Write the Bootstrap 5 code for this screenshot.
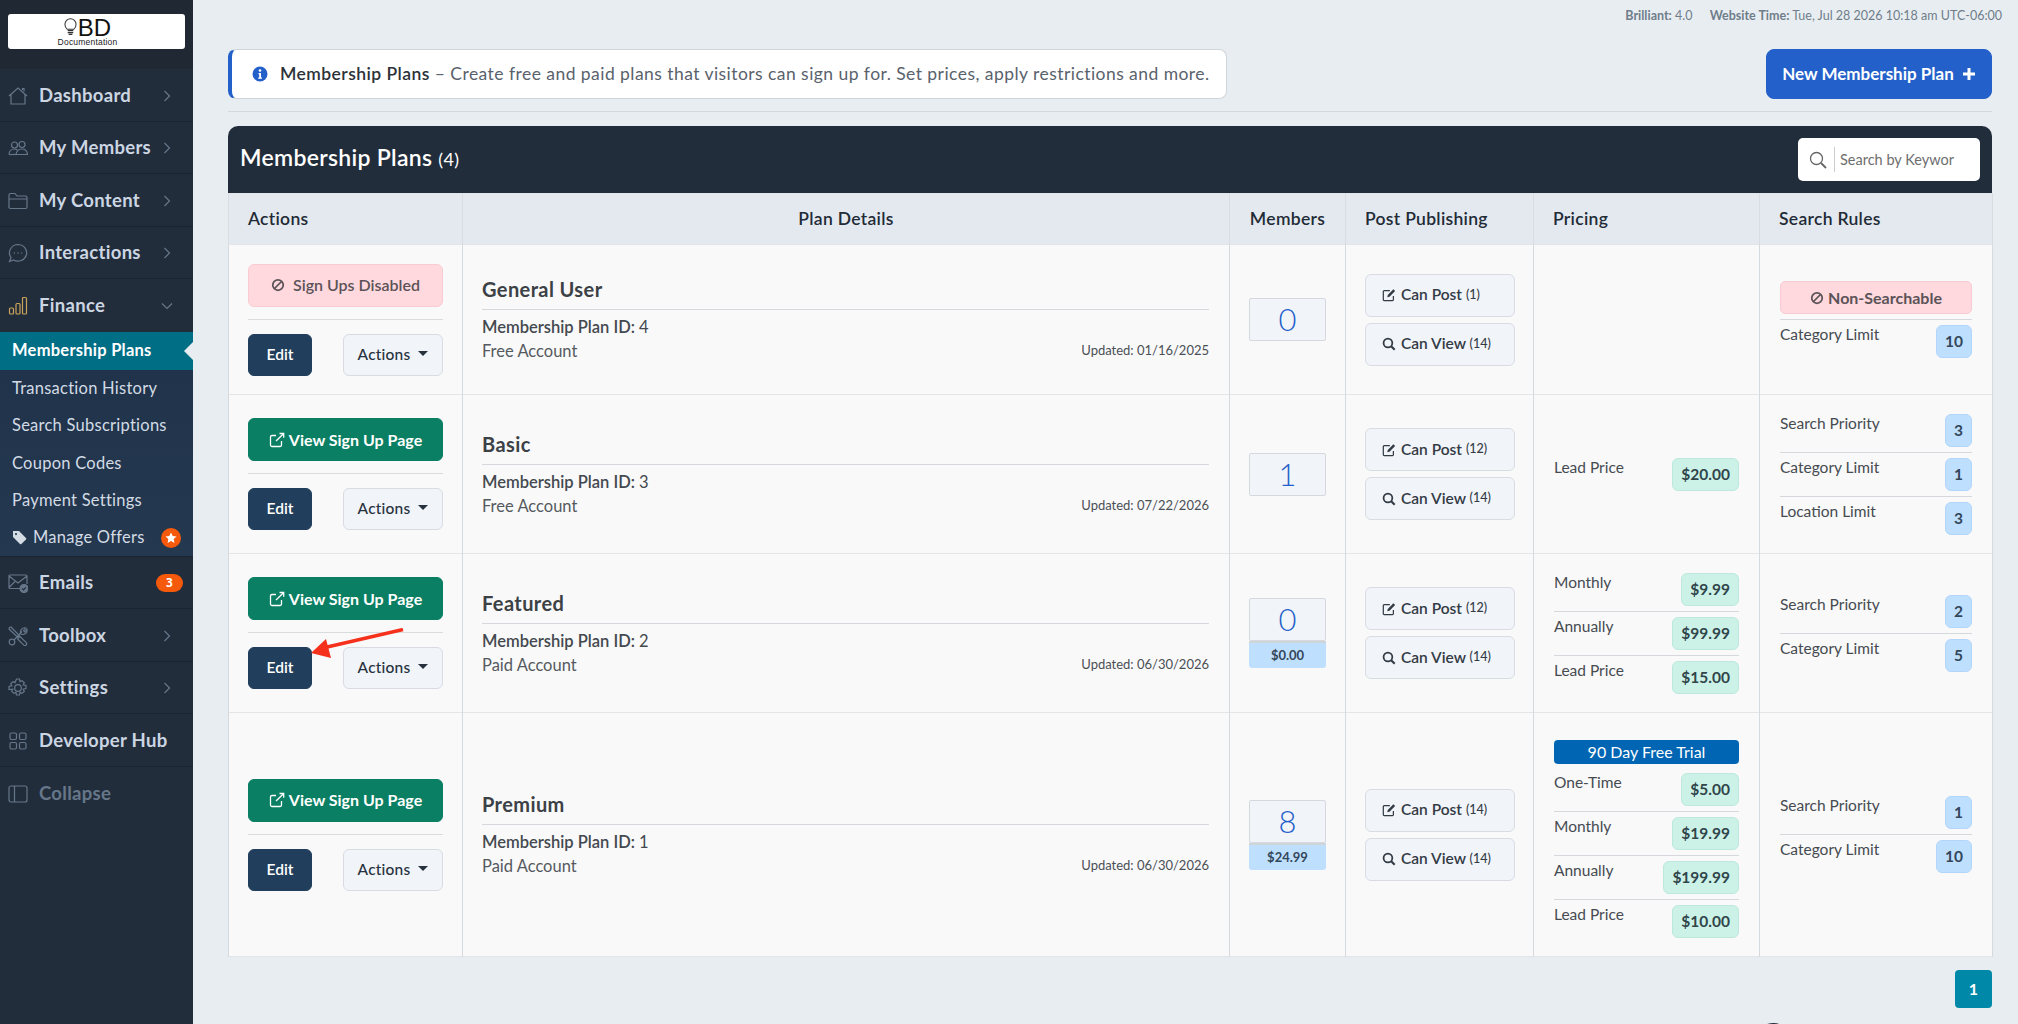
<!DOCTYPE html>
<html>
<head>
<meta charset="utf-8">
<title>Membership Plans</title>
<link href="https://cdn.jsdelivr.net/npm/bootstrap@5.3.0/dist/css/bootstrap.min.css" rel="stylesheet">
<style>
body { background: #e8edf1; font-family: Lato, "Noto Sans", sans-serif; color: #3a4046; height: 1024px; overflow: hidden; }
.side-bar { width: 193px; height: 1024px; background: #222d3b; flex-shrink: 0; }
.logo-wrap { height: 69px; background: #1f2833; padding: 14px 8px 0; }
.logo-box { height: 35px; background: #fff; border-radius: 3px; padding-right: 18px; }
.logo-bd { font: 400 24px/21px "Liberation Sans", sans-serif; color: #111; margin-left: 1px; }
.logo-doc { font: 400 8.5px/9px "Liberation Sans", sans-serif; color: #222; letter-spacing: .2px; }
.side-item { height: 52.5px; padding: 2px 8px 0; border-bottom: 1px solid #1b2430; color: #ccd6e3; font-size: 18.5px; font-weight: 700; text-decoration: none; letter-spacing: .3px; }
.side-item svg.nav-ico { width: 20px; height: 20px; margin-right: 11px; stroke: #66778a; fill: none; stroke-width: 1.2; flex-shrink: 0; }
.side-item .chev { width: 8px; height: 12px; margin-left: auto; margin-right: 14px; stroke: #66778a; fill: none; stroke-width: 1.2; }
.side-item.no-line { border-bottom: 0; }
.side-dim { color: #66778a; }
.sub-menu { background: linear-gradient(#1f3249, #24384f); border-bottom: 1px solid #1b2430; height: 225px; }
.sub-link { height: 37.4px; padding-left: 12px; color: #d3dbe5; font-size: 16.5px; text-decoration: none; letter-spacing: .25px; }
.sub-on { height: 38px; background: #006e85; color: #fff; font-weight: 700; position: relative; }
.sub-on::after { content: ""; position: absolute; right: 0; top: 10px; border: 9px solid transparent; border-right-color: #e8edf1; border-left-width: 0; }
.tag-ico { margin-right: 6px; }
.star-dot { width: 20px; height: 20px; background: #f4590c; border-radius: 50%; margin-left: auto; margin-right: 12px; }
.mail-pill { width: 27px; height: 18px; background: #f4590c; color: #fff; border-radius: 9px; font: 700 12px/18px "DejaVu Sans Mono", monospace; text-align: center; margin-left: auto; margin-right: 2px; }
.main-pane { flex: 1; padding: 0 26px 0 35px; min-width: 0; }
.top-info { height: 49px; padding-top: 7px; margin-right: -10px; font-size: 12.5px; color: #6f7d8b; line-height: 18px; }
.top-info b { font-weight: 700; margin-left: 14px; }
.intro-box { width: 999px; height: 50px; background: #fff; border: 1px solid #d0d5da; border-left: 4px solid #2460c9; border-radius: 8px; font-size: 17.5px; letter-spacing: .45px; color: #59626c; padding-left: 20px; }
.intro-box svg { margin-right: 12px; }
.intro-box b { font-weight: 600; color: #2c3238; }
.new-btn { width: 226px; height: 50px; background: #2460c9; border-color: #2460c9; border-radius: 8px; font-size: 17px; font-weight: 700; color: #fff; }
.head-rule { border-top: 1px solid #d3d8dc; margin: 12px 0 14px; opacity: 1; }
.plans-wrap { width: 1764px; position: relative; }
.plans-head { height: 67px; background: #222d3b; border-radius: 10px 10px 0 0; padding: 0 12px; color: #fff; font-size: 23px; font-weight: 600; letter-spacing: .3px; }
.plans-title { padding-bottom: 4px; }
.plans-head small { font-size: 18px; font-weight: 400; }
.find-box { width: 182px; height: 43px; background: #fff; border-radius: 5px; padding-left: 11px; }
.find-box svg { width: 18px; height: 18px; margin-right: 7px; }
.find-box input { border: 0; border-left: 1px solid #ccc; height: 25px; width: 140px; padding: 0 0 0 5px; font-size: 14.5px; outline: 0; color: #666; }
.find-box input::placeholder { color: #6e6e6e; opacity: 1; }
.plans-table { table-layout: fixed; width: 1764px; --bs-table-bg: #f9f9f9; --bs-table-border-color: #e3e5e8; border-color: #e3e5e8; border-left: 1px solid #d5dadf; border-right: 1px solid #d5dadf; }
.plans-table thead th { height: 51px; background: #e4e9f0; font-size: 17.5px; font-weight: 600; letter-spacing: .3px; color: #222b36; padding: 0 19px; vertical-align: middle; border-color: #d9dde2; }
.plans-table td { padding: 18.5px 20px; vertical-align: middle; }
.plans-table td:nth-child(2), .plans-table td:nth-child(4) { padding-left: 19px; }
.c-act { width: 234px; } .c-plan { width: 767px; } .c-mem { width: 116px; } .c-post { width: 188px; } .c-price { width: 226px; } .c-rule { width: 233px; }
.act-block { position: relative; width: 195px; margin: 0 auto 0 -1px; }
.act-top { height: 43px; border-radius: 6px; font-size: 16px; font-weight: 700; width: 100%; padding: 0; }
.act-green { background: #0a7f63; border-color: #0a7f63; color: #fff; }
.act-off { background: #ffd9de; border: 1px solid #f9ccd3; color: #5b5358; font-weight: 600; }
.act-line { border-top: 1px solid #d9dcdf; margin: 12px 0 14px; opacity: 1; }
.edit-btn { width: 64px; height: 42px; background: #213f5c; border-color: #213f5c; color: #fff; font-size: 15.5px; font-weight: 600; border-radius: 6px; padding: 0; }
.more-btn { width: 100px; height: 42px; background: #f1f4f9; border: 1px solid #d8dce2; color: #27323e; font-size: 15.5px; font-weight: 500; letter-spacing: .2px; border-radius: 6px; padding: 0; }
.more-btn::after { margin-left: 8px; border-top-width: .36em; border-left-width: .36em; border-right-width: .36em; }
.red-arrow { position: absolute; left: 63px; top: 51px; width: 94px; height: 32px; }
.plan-name { font-size: 20px; font-weight: 700; letter-spacing: .4px; color: #3c4146; border-bottom: 1px solid #d5d8dc; padding-bottom: 7px; margin-bottom: 5px; line-height: 26px; }
.plan-id { font-size: 16.5px; font-weight: 600; color: #44494f; line-height: 24px; }
.plan-id span { font-weight: 400; }
.plan-type { font-size: 16.5px; color: #55595f; line-height: 24px; }
.plan-date { font-size: 13px; color: #4a4f55; }
.num-box { width: 77px; height: 43px; margin-left: -1px; background: #f1f4f9; border: 1px solid #d5d9df; font-size: 31px; font-weight: 300; color: #2460c9; line-height: 41px; text-align: center; border-radius: 2px; }
.num-sub { width: 77px; height: 27px; margin-left: -1px; background: #bfdfff; border-top: 2px solid #d0d5da; color: #33475a; font-size: 13px; font-weight: 700; line-height: 25px; text-align: center; border-radius: 0 0 3px 3px; }
.post-stack { gap: 6px; }
.post-btn { width: 150px; height: 43px; background: #f1f4f9; border: 1px solid #d8dce2; border-radius: 6px; color: #333b45; font-size: 15.5px; font-weight: 600; padding: 0 0 0 16px; }
.post-btn small { font-size: 12.5px; font-weight: 500; }
.post-btn svg { width: 14px; height: 14px; margin-right: 5px; }
.no-search { height: 33px; background: #ffd9de; border: 1px solid #f9ccd3; border-radius: 5px; color: #5b5358; font-size: 16px; font-weight: 700; }
.val-row { min-height: 33px; font-size: 15.5px; color: #464b51; line-height: 18px; }
.val-row + .val-row, .no-search + .val-row { border-top: 1px solid #d5d8dc; margin-top: 5px; padding-top: 5px; }
.val-pill { height: 33px; line-height: 31px; padding: 0 8px; border-radius: 6px; font-size: 15.5px; font-weight: 700; }
.pill-blue { background: #bfdfff; border: 1px solid #b2d6fa; color: #33475a; }
.pill-mint { background: #ccf2e8; border: 1px solid #bce9dc; color: #30454a; }
.trial-bar { height: 24px; background: #0065b3; color: #fff; border-radius: 4px; font-size: 16px; line-height: 24px; text-align: center; margin: 8px 0 9px; }
.page-btn { width: 37px; height: 38px; background: #0088a8; color: #fff; font-weight: 700; font-size: 16px; border-radius: 4px; }
.pager-row { margin-top: 13px; }
.help-peek { position: absolute; left: 1753px; top: 1023px; width: 40px; height: 40px; border-radius: 50%; background: #222d3b; }
</style>
</head>
<body>
<svg width="0" height="0" class="position-absolute">
  <symbol id="i-edit" viewBox="0 0 16 16"><path d="M13 9v4.500a1 1 0 0 1-1 1H2.500a1 1 0 0 1-1-1V4a1 1 0 0 1 1-1H9" fill="none" stroke="currentColor" stroke-width="1.400"/><path d="M6 10.500l.6-2.600L13 1.500l2 2-6.400 6.400z" fill="currentColor"/></symbol>
  <symbol id="i-find" viewBox="0 0 16 16"><circle cx="6.800" cy="6.800" r="5" fill="none" stroke="currentColor" stroke-width="2"/><path d="M10.500 10.500l4 4" stroke="currentColor" stroke-width="2.400"/></symbol>
  <symbol id="i-out" viewBox="0 0 16 16"><path d="M12.500 9v4a1.500 1.500 0 0 1-1.500 1.500H3A1.500 1.500 0 0 1 1.500 13V5A1.500 1.500 0 0 1 3 3.500h4" fill="none" stroke="currentColor" stroke-width="1.300"/><path d="M10.500 1.500h4.200v4.200M14.500 1.700L7 9" fill="none" stroke="currentColor" stroke-width="1.300"/></symbol>
  <symbol id="i-ban" viewBox="0 0 16 16"><circle cx="8" cy="8" r="6" fill="none" stroke="currentColor" stroke-width="2"/><path d="M4 12l8-8" stroke="currentColor" stroke-width="2"/></symbol>
  <symbol id="i-chev" viewBox="0 0 8 12"><path d="M1.500 1l5 5-5 5"/></symbol>
</svg>
<div class="d-flex">
  <nav class="side-bar d-flex flex-column">
    <div class="logo-wrap">
      <div class="logo-box d-flex align-items-center justify-content-center flex-column">
        <div class="d-flex align-items-center">
          <svg width="13" height="20" viewBox="0 0 14 20"><path d="M3.500 12.500C1.500 11 1 9 1 7a6 6 0 0 1 12 0c0 2-.5 4-2.500 5.500z" fill="none" stroke="#333" stroke-width="1.100"/><path d="M4 14h6M4 16h6M5 18h4" stroke="#333" stroke-width="1.300"/></svg>
          <span class="logo-bd">BD</span>
        </div>
        <div class="logo-doc">Documentation</div>
      </div>
    </div>
    <a class="side-item d-flex align-items-center" href="#"><svg class="nav-ico" viewBox="0 0 20 20"><path d="M1 10l9-8 9 8M3 8.500V18h14V8.500M14.500 4V2.500h1.500v3"/></svg>Dashboard<svg class="chev"><use href="#i-chev"/></svg></a>
    <a class="side-item d-flex align-items-center" href="#"><svg class="nav-ico" viewBox="0 0 20 20"><circle cx="6.500" cy="7" r="3"/><circle cx="14" cy="6.500" r="3"/><path d="M1 16.500c0-3.500 2.500-5.500 5.500-5.500 2 0 3 1 3.500 2M8 16.500c.5-3.500 3-5.500 6-5.500s5 2 5.500 5.500z"/><path d="M1 16.500h8"/></svg>My Members<svg class="chev"><use href="#i-chev"/></svg></a>
    <a class="side-item d-flex align-items-center" href="#"><svg class="nav-ico" viewBox="0 0 20 20"><path d="M1 17V4a1.500 1.500 0 0 1 1.500-1.500H7l2 2.500h8.500A1.500 1.500 0 0 1 19 6.500V16a1.500 1.500 0 0 1-1.500 1.500h-15A1.500 1.500 0 0 1 1 16zM1 8h18"/></svg>My Content<svg class="chev"><use href="#i-chev"/></svg></a>
    <a class="side-item d-flex align-items-center" href="#"><svg class="nav-ico" viewBox="0 0 20 20"><path d="M10 1.500a8.800 8.300 0 1 1-4.500 15.500L1.500 18.500l1.500-4A8.500 8.300 0 0 1 10 1.500z"/><path d="M5.800 10h1M9.500 10h1M13.200 10h1" stroke-width="1.600"/></svg>Interactions<svg class="chev"><use href="#i-chev"/></svg></a>
    <a class="side-item no-line d-flex align-items-center" href="#"><svg class="nav-ico" viewBox="0 0 20 20" style="stroke:#c9a35c"><rect x="1.500" y="12" width="4" height="6" rx="1"/><rect x="8" y="7.500" width="4" height="10.500" rx="1"/><rect x="14.500" y="1.500" width="4" height="16.500" rx="1"/></svg>Finance<svg class="chev" viewBox="0 0 12 8" style="width:12px;margin-right:12px"><path d="M1 1.500l5 5 5-5"/></svg></a>
    <div class="sub-menu">
      <a class="sub-link sub-on d-flex align-items-center" href="#">Membership Plans</a>
      <a class="sub-link d-flex align-items-center" href="#">Transaction History</a>
      <a class="sub-link d-flex align-items-center" href="#">Search Subscriptions</a>
      <a class="sub-link d-flex align-items-center" href="#">Coupon Codes</a>
      <a class="sub-link d-flex align-items-center" href="#">Payment Settings</a>
      <a class="sub-link d-flex align-items-center" href="#">
        <svg width="15" height="15" viewBox="0 0 15 15" class="tag-ico"><path fill-rule="evenodd" d="M1 1h6l7 7a1 1 0 0 1 0 1.400L9.400 14a1 1 0 0 1-1.400 0L1 7zM4 3a1 1 0 1 0 .01 0z" fill="#d3dbe5"/></svg>Manage Offers
        <span class="star-dot d-flex align-items-center justify-content-center"><svg width="12" height="12" viewBox="0 0 12 12"><path d="M6 .500l1.700 3.500 3.800.5-2.800 2.600.7 3.800L6 9.100l-3.400 1.800.7-3.800L.5 4.500l3.800-.5z" fill="#fff"/></svg></span>
      </a>
    </div>
    <a class="side-item d-flex align-items-center" href="#"><svg class="nav-ico" viewBox="0 0 20 20"><path d="M12 15.500H2a1 1 0 0 1-1-1V3a1 1 0 0 1 1-1h16a1 1 0 0 1 1 1v8M1 3l9 7 9-7M1 14.500l6-6"/><circle cx="16" cy="15.500" r="4" fill="#66778a"/><path d="M14.200 15.500l1.300 1.300 2.300-2.500" stroke="#222d3b"/></svg>Emails<span class="mail-pill">3</span></a>
    <a class="side-item d-flex align-items-center" href="#"><svg class="nav-ico" viewBox="0 0 20 20"><circle cx="4" cy="16" r="2.800"/><path d="M6 14L14 5.500M13 8a4.200 4.200 0 0 1 5-6l-2.500 2.500 1.200 1.300L19 3.500a4.200 4.200 0 0 1-6 4.500"/><path d="M1.500 1.500l1.500-.5 8.500 8.800-1.600 1.600L1 3zM12 10.500l6.200 6.200a1.700 1.700 0 0 1-2.400 2.400l-6.200-6.200z"/></svg>Toolbox<svg class="chev"><use href="#i-chev"/></svg></a>
    <a class="side-item d-flex align-items-center" href="#"><svg class="nav-ico" viewBox="0 0 20 20"><circle cx="10" cy="10" r="3.300"/><path d="M8.500 1h3l.5 2.600 2-1 2.300 2.100-1.100 2.100 2.800.7v3l-2.800.7 1.100 2.100-2.300 2.100-2-1-.5 2.600h-3l-.5-2.600-2 1-2.300-2.100 1.100-2.100L1 11.500v-3l2.800-.7-1.100-2.100 2.300-2.100 2 1z"/></svg>Settings<svg class="chev"><use href="#i-chev"/></svg></a>
    <a class="side-item d-flex align-items-center" href="#"><svg class="nav-ico" viewBox="0 0 20 20"><rect x="2" y="2" width="6.500" height="6.500" rx="1.500"/><rect x="11.500" y="2" width="6.500" height="6.500" rx="1.500"/><rect x="2" y="11.500" width="6.500" height="6.500" rx="1.500"/><rect x="11.500" y="11.500" width="6.500" height="6.500" rx="1.500"/></svg>Developer Hub</a>
    <a class="side-item side-dim d-flex align-items-center border-0" href="#"><svg class="nav-ico" viewBox="0 0 20 20"><rect x="1" y="2" width="18" height="16" rx="2"/><path d="M6.500 2v16"/></svg>Collapse</a>
  </nav>

  <main class="main-pane">
    <div class="top-info text-end"><b>Brilliant:</b> 4.0 <b>Website Time:</b> Tue, Jul 28 2026 10:18 am UTC-06:00</div>
    <div class="d-flex justify-content-between">
      <div class="intro-box d-flex align-items-center">
        <svg width="16" height="16" viewBox="0 0 16 16" class="flex-shrink-0"><circle cx="8" cy="8" r="7.500" fill="#2460c9"/><circle cx="8" cy="4.500" r="1.300" fill="#fff"/><path d="M6.500 7h2.500v4.500h1v1.200H6.200v-1.200h1V8.200H6.500z" fill="#fff"/></svg>
        <span><b>Membership Plans</b> – Create free and paid plans that visitors can sign up for. Set prices, apply restrictions and more.</span>
      </div>
      <button class="btn new-btn d-flex align-items-center justify-content-center gap-2">New Membership Plan
        <svg width="14" height="14" viewBox="0 0 14 14"><path d="M7 1v12M1 7h12" stroke="#fff" stroke-width="3"/></svg>
      </button>
    </div>
    <hr class="head-rule">
    <div class="plans-wrap">
      <div class="plans-head d-flex align-items-center justify-content-between">
        <div class="plans-title">Membership Plans <small>(4)</small></div>
        <div class="find-box d-flex align-items-center">
          <svg viewBox="0 0 18 18"><circle cx="7.500" cy="7.500" r="6" fill="none" stroke="#666" stroke-width="1.300"/><path d="M12 12l5 5" stroke="#666" stroke-width="1.800"/></svg>
          <input type="text" placeholder="Search by Keywor">
        </div>
      </div>
      <table class="table table-bordered mb-0 plans-table">
        <thead>
          <tr>
            <th class="c-act">Actions</th>
            <th class="c-plan text-center">Plan Details</th>
            <th class="c-mem text-center">Members</th>
            <th class="c-post">Post Publishing</th>
            <th class="c-price">Pricing</th>
            <th class="c-rule">Search Rules</th>
          </tr>
        </thead>
        <tbody>
          <tr>
            <td>
              <div class="act-block">
                <button class="btn act-top act-off d-flex align-items-center justify-content-center gap-2"><svg width="14" height="14"><use href="#i-ban"/></svg>Sign Ups Disabled</button>
                <hr class="act-line">
                <div class="d-flex justify-content-between">
                  <button class="btn edit-btn">Edit</button>
                  <button class="btn more-btn dropdown-toggle">Actions</button>
                </div>
              </div>
            </td>
            <td>
              <div class="plan-name">General User</div>
              <div class="plan-id">Membership Plan ID: <span>4</span></div>
              <div class="d-flex justify-content-between align-items-center"><div class="plan-type">Free Account</div><div class="plan-date">Updated: 01/16/2025</div></div>
            </td>
            <td><div class="num-box">0</div></td>
            <td>
              <div class="d-flex flex-column post-stack">
                <button class="btn post-btn d-flex align-items-center"><svg><use href="#i-edit"/></svg>Can Post&nbsp;<small>(1)</small></button>
                <button class="btn post-btn d-flex align-items-center"><svg><use href="#i-find"/></svg>Can View&nbsp;<small>(14)</small></button>
              </div>
            </td>
            <td></td>
            <td>
              <div class="no-search d-flex align-items-center justify-content-center gap-1"><svg width="14" height="14"><use href="#i-ban"/></svg>Non-Searchable</div>
              <div class="val-row d-flex justify-content-between align-items-start"><span>Category Limit</span><span class="val-pill pill-blue">10</span></div>
            </td>
          </tr>
          <tr>
            <td>
              <div class="act-block">
                <button class="btn act-top act-green d-flex align-items-center justify-content-center gap-1"><svg width="16" height="16"><use href="#i-out"/></svg>View Sign Up Page</button>
                <hr class="act-line">
                <div class="d-flex justify-content-between">
                  <button class="btn edit-btn">Edit</button>
                  <button class="btn more-btn dropdown-toggle">Actions</button>
                </div>
              </div>
            </td>
            <td>
              <div class="plan-name">Basic</div>
              <div class="plan-id">Membership Plan ID: <span>3</span></div>
              <div class="d-flex justify-content-between align-items-center"><div class="plan-type">Free Account</div><div class="plan-date">Updated: 07/22/2026</div></div>
            </td>
            <td><div class="num-box">1</div></td>
            <td>
              <div class="d-flex flex-column post-stack">
                <button class="btn post-btn d-flex align-items-center"><svg><use href="#i-edit"/></svg>Can Post&nbsp;<small>(12)</small></button>
                <button class="btn post-btn d-flex align-items-center"><svg><use href="#i-find"/></svg>Can View&nbsp;<small>(14)</small></button>
              </div>
            </td>
            <td>
              <div class="val-row d-flex justify-content-between align-items-start"><span>Lead Price</span><span class="val-pill pill-mint">$20.00</span></div>
            </td>
            <td>
              <div class="val-row d-flex justify-content-between align-items-start"><span>Search Priority</span><span class="val-pill pill-blue">3</span></div>
              <div class="val-row d-flex justify-content-between align-items-start"><span>Category Limit</span><span class="val-pill pill-blue">1</span></div>
              <div class="val-row d-flex justify-content-between align-items-start"><span>Location Limit</span><span class="val-pill pill-blue">3</span></div>
            </td>
          </tr>
          <tr>
            <td>
              <div class="act-block">
                <button class="btn act-top act-green d-flex align-items-center justify-content-center gap-1"><svg width="16" height="16"><use href="#i-out"/></svg>View Sign Up Page</button>
                <hr class="act-line">
                <div class="d-flex justify-content-between">
                  <button class="btn edit-btn">Edit</button>
                  <button class="btn more-btn dropdown-toggle">Actions</button>
                </div>
                <svg class="red-arrow" viewBox="0 0 94 32"><path d="M92 1.500L14 19.500" stroke="#f5301b" stroke-width="3.500"/><path d="M0 25L15 11 20 30z" fill="#f5301b"/></svg>
              </div>
            </td>
            <td>
              <div class="plan-name">Featured</div>
              <div class="plan-id">Membership Plan ID: <span>2</span></div>
              <div class="d-flex justify-content-between align-items-center"><div class="plan-type">Paid Account</div><div class="plan-date">Updated: 06/30/2026</div></div>
            </td>
            <td><div class="num-box">0</div><div class="num-sub">$0.00</div></td>
            <td>
              <div class="d-flex flex-column post-stack">
                <button class="btn post-btn d-flex align-items-center"><svg><use href="#i-edit"/></svg>Can Post&nbsp;<small>(12)</small></button>
                <button class="btn post-btn d-flex align-items-center"><svg><use href="#i-find"/></svg>Can View&nbsp;<small>(14)</small></button>
              </div>
            </td>
            <td>
              <div class="val-row d-flex justify-content-between align-items-start"><span>Monthly</span><span class="val-pill pill-mint">$9.99</span></div>
              <div class="val-row d-flex justify-content-between align-items-start"><span>Annually</span><span class="val-pill pill-mint">$99.99</span></div>
              <div class="val-row d-flex justify-content-between align-items-start"><span>Lead Price</span><span class="val-pill pill-mint">$15.00</span></div>
            </td>
            <td>
              <div class="val-row d-flex justify-content-between align-items-start"><span>Search Priority</span><span class="val-pill pill-blue">2</span></div>
              <div class="val-row d-flex justify-content-between align-items-start"><span>Category Limit</span><span class="val-pill pill-blue">5</span></div>
            </td>
          </tr>
          <tr>
            <td>
              <div class="act-block">
                <button class="btn act-top act-green d-flex align-items-center justify-content-center gap-1"><svg width="16" height="16"><use href="#i-out"/></svg>View Sign Up Page</button>
                <hr class="act-line">
                <div class="d-flex justify-content-between">
                  <button class="btn edit-btn">Edit</button>
                  <button class="btn more-btn dropdown-toggle">Actions</button>
                </div>
              </div>
            </td>
            <td>
              <div class="plan-name">Premium</div>
              <div class="plan-id">Membership Plan ID: <span>1</span></div>
              <div class="d-flex justify-content-between align-items-center"><div class="plan-type">Paid Account</div><div class="plan-date">Updated: 06/30/2026</div></div>
            </td>
            <td><div class="num-box">8</div><div class="num-sub">$24.99</div></td>
            <td>
              <div class="d-flex flex-column post-stack">
                <button class="btn post-btn d-flex align-items-center"><svg><use href="#i-edit"/></svg>Can Post&nbsp;<small>(14)</small></button>
                <button class="btn post-btn d-flex align-items-center"><svg><use href="#i-find"/></svg>Can View&nbsp;<small>(14)</small></button>
              </div>
            </td>
            <td>
              <div class="trial-bar">90 Day Free Trial</div>
              <div class="val-row d-flex justify-content-between align-items-start"><span>One-Time</span><span class="val-pill pill-mint">$5.00</span></div>
              <div class="val-row d-flex justify-content-between align-items-start"><span>Monthly</span><span class="val-pill pill-mint">$19.99</span></div>
              <div class="val-row d-flex justify-content-between align-items-start"><span>Annually</span><span class="val-pill pill-mint">$199.99</span></div>
              <div class="val-row d-flex justify-content-between align-items-start"><span>Lead Price</span><span class="val-pill pill-mint">$10.00</span></div>
            </td>
            <td>
              <div class="val-row d-flex justify-content-between align-items-start"><span>Search Priority</span><span class="val-pill pill-blue">1</span></div>
              <div class="val-row d-flex justify-content-between align-items-start"><span>Category Limit</span><span class="val-pill pill-blue">10</span></div>
            </td>
          </tr>
        </tbody>
      </table>
      <div class="pager-row d-flex justify-content-end">
        <a class="page-btn d-flex align-items-center justify-content-center text-decoration-none" href="#">1</a>
      </div>
    </div>
  </main>
</div>
<div class="help-peek"></div>
<script src="https://cdn.jsdelivr.net/npm/bootstrap@5.3.0/dist/js/bootstrap.bundle.min.js"></script>
</body>
</html>
